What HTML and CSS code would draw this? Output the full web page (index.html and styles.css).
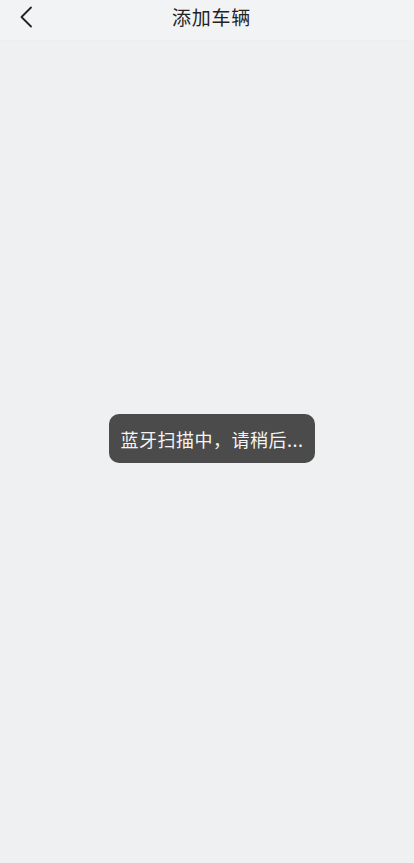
FILE: index.html
```html
<!DOCTYPE html>
<html lang="zh">
<head>
<meta charset="utf-8">
<link rel="stylesheet" href="styles.css">
</head>
<body>
<div class="page">
  <header class="nav">
    <span class="back">
      <svg width="14" height="22" viewBox="0 0 14 22"><path d="M12 1.5 L2.5 11 L12 20.5" fill="none" stroke="#222" stroke-width="1.8" stroke-linecap="round" stroke-linejoin="round"/></svg>
    </span>
    <h1 class="title">添加车辆</h1>
  </header>
  <main class="content">
    <div class="toast">蓝牙扫描中，请稍后...</div>
  </main>
</div>
</body>
</html>
```
FILE: styles.css
```css
html, body {
  margin: 0;
  padding: 0;
  background: #eff0f2;
  font-family: "Noto Sans CJK SC", "Noto Sans", sans-serif;
}
.page {
  width: 414px;
  height: 863px;
  display: flex;
  flex-direction: column;
  position: relative;
}
.nav {
  height: 40px;
  flex: none;
  background: #f2f3f5;
  border-bottom: 1px solid #eceef0;
  display: flex;
  align-items: center;
  justify-content: center;
  position: relative;
}
.back {
  position: absolute;
  left: 19px;
  top: 6px;
  display: flex;
}
.title {
  margin: -8px 0 0 9px;
  font-size: 19px;
  font-weight: 400;
  letter-spacing: 0.8px;
  color: #222;
  line-height: 1;
}
.content {
  flex: 1;
  position: relative;
}
.toast {
  position: absolute;
  left: 109px;
  top: 373px;
  width: 206px;
  height: 49px;
  box-sizing: border-box;
  background: #4a4b4a;
  border-radius: 10px;
  color: #f4f4f4;
  font-size: 18px;
  letter-spacing: 0.5px;
  display: flex;
  align-items: center;
  justify-content: center;
  white-space: nowrap;
}
```
